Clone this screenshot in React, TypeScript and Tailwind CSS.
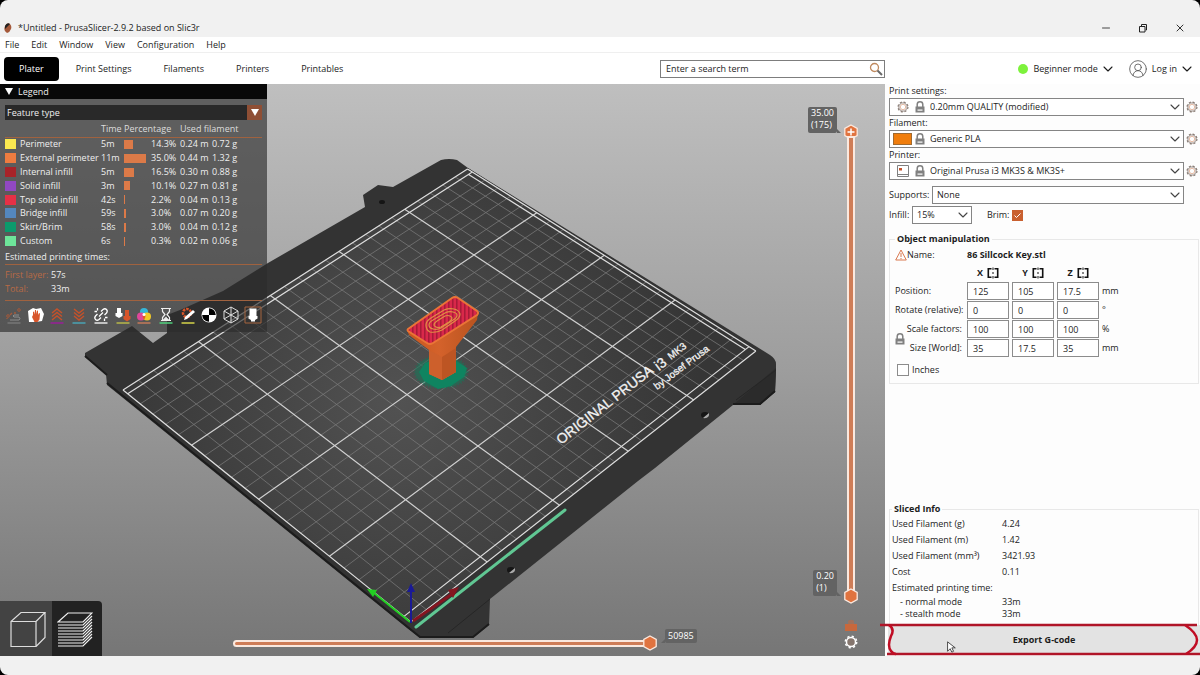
import React, { useState } from "react";
import { ChevronDown, CircleUserRound, Minus, X } from "lucide-react";

const menus = ["File", "Edit", "Window", "View", "Configuration", "Help"];
const tabs = ["Plater", "Print Settings", "Filaments", "Printers", "Printables"];

const features = [
  { name: "Perimeter", color: "bg-[#fbe850]", time: "5m", bar: 9, pct: "14.3%", m: "0.24 m", g: "0.72 g" },
  { name: "External perimeter", color: "bg-[#ee7c40]", time: "11m", bar: 22, pct: "35.0%", m: "0.44 m", g: "1.32 g" },
  { name: "Internal infill", color: "bg-[#a82329]", time: "5m", bar: 10, pct: "16.5%", m: "0.30 m", g: "0.88 g" },
  { name: "Solid infill", color: "bg-[#9148c2]", time: "3m", bar: 6, pct: "10.1%", m: "0.27 m", g: "0.81 g" },
  { name: "Top solid infill", color: "bg-[#e53046]", time: "42s", bar: 1, pct: "2.2%", m: "0.04 m", g: "0.13 g" },
  { name: "Bridge infill", color: "bg-[#5487bd]", time: "59s", bar: 2, pct: "3.0%", m: "0.07 m", g: "0.20 g" },
  { name: "Skirt/Brim", color: "bg-[#0b9a6c]", time: "58s", bar: 2, pct: "3.0%", m: "0.04 m", g: "0.12 g" },
  { name: "Custom", color: "bg-[#6ee59a]", time: "6s", bar: 1, pct: "0.3%", m: "0.02 m", g: "0.06 g" },
];

const transforms = [
  { label: "Position:", values: ["125", "105", "17.5"], unit: "mm" },
  { label: "Rotate (relative):", values: ["0", "0", "0"], unit: "°" },
  { label: "Scale factors:", values: ["100", "100", "100"], unit: "%" },
  { label: "Size [World]:", values: ["35", "17.5", "35"], unit: "mm" },
];

const Gear = ({ className = "" }: { className?: string }) => (
  <svg viewBox="0 0 16 16" className={`h-3 w-3 shrink-0 ${className}`} fill="none">
    <circle cx="8" cy="8" r="6.6" stroke="#8a7d76" strokeWidth="1.6" strokeDasharray="2.9 2.28" />
    <circle cx="8" cy="8" r="5.5" stroke="#8a7d76" strokeWidth="1.2" />
    <circle cx="8" cy="8" r="3.6" stroke="#e3b49c" strokeWidth="1.2" />
  </svg>
);

const Lock = ({ className = "" }: { className?: string }) => (
  <svg viewBox="0 0 10 12" className={`h-3 w-2.5 shrink-0 ${className}`}>
    <path d="M2.2 6V3.4a2.8 2.6 0 0 1 5.6 0V6" fill="none" stroke="#808080" strokeWidth="1.5" />
    <path d="M.5 5.5h9v6h-9z" fill="#808080" />
    <path d="M2.5 8.5h5v1.2h-5z" fill="#fff" />
  </svg>
);

const Mirror = () => (
  <svg viewBox="0 0 12 12" className="h-3 w-3" fill="none" stroke="#111" strokeWidth="1.6">
    <path d="M4.5 1.8H1.3v8.4h3.2M7.5 1.8h3.2v8.4H7.5" />
    <path d="M6 .5V3M6 5v2M6 9v2.5" strokeWidth="1" />
  </svg>
);

type PickerProps = {
  id: string;
  value: string;
  icon?: React.ReactNode;
  className?: string;
};

const Picker = ({ id, value, icon, className = "" }: PickerProps) => (
  <div className={`relative h-[18px] ${className}`}>
    <select
      id={id}
      className={`block h-full w-full appearance-none border border-[#858585] bg-white text-[9px] leading-4 outline-none ${
        icon ? "pl-10" : "pl-1"
      }`}
    >
      <option>{value}</option>
    </select>
    {icon && (
      <div className="pointer-events-none absolute inset-y-0 left-1 flex w-8 items-center justify-between">
        {icon}
        <Lock />
      </div>
    )}
    <ChevronDown className="pointer-events-none absolute right-px top-px h-4 w-4 text-[#444]" strokeWidth={1.6} />
  </div>
);

const Preset = ({ label, ...rest }: PickerProps & { label: string }) => (
  <div>
    <label htmlFor={rest.id} className="block leading-[14px]">
      {label}
    </label>
    <div className="flex items-center gap-0.5 pr-px">
      <Picker {...rest} className="flex-1" />
      <button aria-label={`Edit ${rest.id}`}>
        <Gear />
      </button>
    </div>
  </div>
);

// maps bed millimetres to the scene, x runs 0..250 and y runs -4.5..204
const project = (x: number, y: number) => {
  const u = x / 250;
  const v = 0.0218 + 0.0048 * y;
  const w = 0.1353 * u + 0.1148 * v + 1;
  return [
    (447.3 * u - 273.9 * v + 411) / w,
    (-223.5 * u - 187.2 * v + 622) / w,
  ];
};

const seg = (x1: number, y1: number, x2: number, y2: number) => {
  const [ax, ay] = project(x1, y1);
  const [bx, by] = project(x2, y2);
  return `M${ax.toFixed(1)} ${ay.toFixed(1)}L${bx.toFixed(1)} ${by.toFixed(1)}`;
};

const Y0 = -4.5;
const Y1 = 203.8;
let thin = "";
let bold = "";
for (let x = 10; x < 250; x += 10) {
  if (x % 50) thin += seg(x, Y0, x, Y1);
  else bold += seg(x, Y0, x, Y1);
}
for (let y = 10; y < 200; y += 10) {
  if (y % 50) thin += seg(0, y, 250, y);
  else bold += seg(0, y, 250, y);
}
const frame =
  seg(0, Y0, 250, Y0) +
  seg(0, 0, 250, 0) +
  seg(0, 200, 250, 200) +
  seg(0, Y1, 250, Y1) +
  seg(0, Y0, 0, Y1) +
  seg(250, Y0, 250, Y1) +
  seg(247, 0, 247, 200);

const Scene = () => (
  <svg
    viewBox="0 84 885 572"
    preserveAspectRatio="xMidYMid slice"
    className="absolute inset-0 h-full w-full"
    fontFamily="'Liberation Sans', sans-serif"
  >
    <defs>
      <radialGradient id="bed" gradientUnits="userSpaceOnUse" cx="400" cy="400" r="300">
        <stop offset="0" stopColor="#525252" />
        <stop offset=".55" stopColor="#424242" />
        <stop offset="1" stopColor="#363636" />
      </radialGradient>
      <pattern id="hatch" width="4" height="4" patternUnits="userSpaceOnUse">
        <path d="M0 0h4v4H0z" fill="#d9284a" />
        <path d="M0 0h1.6v4H0z" fill="#a81b38" />
      </pattern>
      <linearGradient id="neck" x1="0" x2="1" y1="0" y2="0">
        <stop offset="0" stopColor="#c9561d" />
        <stop offset=".45" stopColor="#d4622b" />
        <stop offset="1" stopColor="#b9531f" />
      </linearGradient>
    </defs>

    <path
      d="M441 160q8-2 16 0l11 8 302 187q6 4 6 9v8l-1 20-15 13h-27l-78 63-17 13-148 118-1 26-16 13h-53l-13-10L138 410l-31-25-1-11-21-17v-4l47-27 21 17 14-10v-18l13-5 43-19 45-28 97-56-2-12 15-10 15 2z"
      fill="#333"
    />
    <path d="M776 368l-1 24-15 13h-27z" fill="#2b2b2b" />
    <path d="M775 391l-15 13h-27M489 624l-16 13h-53L107 383M85 356l22 19" fill="none" stroke="#1c1c1c" strokeWidth="2" />
    <path d="M490 599l-42 34M776 370l-40 30" fill="none" stroke="#262626" />
    <path d="M468 168l288 183-345 271-289-232z" fill="url(#bed)" />
    <path d={thin} stroke="#777" strokeWidth=".8" fill="none" />
    <path d={bold} stroke="#d0d0d0" strokeWidth="1.2" fill="none" />
    <path d={frame} stroke="#dedede" strokeWidth="1.2" fill="none" />
    <ellipse cx="382" cy="202" rx="3" ry="2" fill="#151515" />
    <ellipse cx="511" cy="570" rx="4" ry="3" fill="#151515" />
    <path d="M509 573q7 1 6-5z" fill="#aaa" />
    <ellipse cx="705" cy="415" rx="4" ry="3" fill="#151515" />
    <path d="M703 418q7 1 6-5z" fill="#aaa" />

    <g fill="#f2f2f2" stroke="#f2f2f2" strokeWidth=".3">
      <text fontSize="14" transform="translate(561 445) rotate(-38)">ORIGINAL PRUSA</text>
      <text fontSize="14" transform="translate(659 371) rotate(-38)">i3</text>
      <text fontSize="10" transform="translate(671 360) rotate(-38)">MK3</text>
      <text fontSize="10" transform="translate(657 390) rotate(-37)">by Josef Prusa</text>
    </g>

    {/* brim and sliced part */}
    <ellipse cx="441" cy="372" rx="26" ry="16" fill="#14795a" opacity=".55" stroke="#14795a" strokeWidth="3" strokeDasharray="1 2" />
    <path d="M419 372l6-9 14-5 16 2 12 8-3 9-13 9-13 3-14-8z" fill="#0f8460" />
    <path d="M407 330l2 5 20 15v24l13 6 14-8v-25l21-27 1-7z" fill="url(#neck)" />
    <path d="M429 350l13 7 14-8v23l-14 8-13-6z" fill="#cd602c" />
    <path d="M442 357l14-9v24l-14 8z" fill="#bd5523" />
    <path
      d="M408 329l44-31q3-2 6 0l19 13q2 2 0 4l-44 28q-3 2-6 0l-19-12q-1-1 0-2z"
      fill="url(#hatch)"
      stroke="#ea7436"
      strokeWidth="2"
    />
    <g fill="none" stroke="#e08f45" strokeWidth="1.2">
      <path d="M426 325q0-4 5-7l13-8q5-2 10-1t6 5q0 4-5 7l-13 9q-6 3-12 2-4-2-4-7z" />
      <path d="M429 325q0-3 4-5l12-7q4-2 8-1t4 3q0 3-4 5l-12 8q-4 2-8 1t-4-4z" />
      <path d="M434 325q0-2 3-4l8-5q3-1 5 0t2 2q0 2-3 4l-8 5q-3 1-5 0t-2-2z" />
    </g>

    {/* priming line and origin axes */}
    <path d="M416 627L565 510" stroke="#60c793" strokeWidth="3" strokeLinecap="round" />
    <path d="M413 621l39-27" stroke="#851520" strokeWidth="3" />
    <path d="M448 590l11-3-6 11z" fill="#851520" />
    <path d="M410 622l-36-29" stroke="#22cf22" strokeWidth="2" />
    <path d="M367 589l10 1-4 7z" fill="#22cf22" />
    <path d="M411 623v-34" stroke="#1a1a96" strokeWidth="2" />
    <path d="M411 583l4 9h-8z" fill="#1a1a96" />
  </svg>
);

const toolIcons = [
  {
    name: "Travel",
    line: "#777777",
    art: (
      <g fill="none" stroke="#8d8d8d">
        <path d="M5 13h9q2-1 0-3H9q-2-1 0-2h5" />
        <path d="M2 12v-1M5 8l2-2M9 6h2" stroke="#a5593a" strokeWidth="1.3" />
        <circle cx="3" cy="9" r="1.3" stroke="#a5593a" />
        <circle cx="14" cy="3" r="1.3" stroke="#a5593a" />
      </g>
    ),
  },
  {
    name: "Wipe",
    art: (
      <g>
        <path d="M1 4l5-3 3 1 5-1 3 6-2 7-6 1H2z" fill="#fff" />
        <path d="M6 8V5l1-.5.6 3L8 3h1l.3 4L10 3.5l1 .2V8l1-2 1 .5-.5 6-2 2.500h-3L5 10z" fill="#d8552a" />
      </g>
    ),
  },
  {
    name: "Retractions",
    line: "#9a1f9a",
    art: <path d="M4 6l5-4 5 4M4 9.5l5-4 5 4M4 13l5-4 5 4" fill="none" stroke="#c4522b" strokeWidth="1.5" />,
  },
  {
    name: "Deretractions",
    line: "#4aa3b5",
    art: <path d="M4 2l5 4 5-4M4 5.5l5 4 5-4M4 9l5 4 5-4" fill="none" stroke="#c4522b" strokeWidth="1.5" />,
  },
  {
    name: "Seams",
    line: "#e8e8e8",
    art: (
      <g fill="none" stroke="#fff" strokeWidth="1.3">
        <path d="M9 4.5l2-2q2-1.5 3.5 0t0 3.5l-2 2M9 10.5l-2 2q-2 1.5-3.5 0t0-3.5l2-2M7 9.5l4-4" />
        <path d="M5.5 1v2.5M2.5 4.5H5M13 10.5h2.5M12.5 11.5V14" />
      </g>
    ),
  },
  {
    name: "Tool changes",
    line: "#b8b84a",
    art: (
      <g>
        <path d="M3 1h4v5h1.5v3L5 11 1.5 9V6H3z" fill="#fff" />
        <path d="M11 3h4v6h1.5v3L13 14.5 9.5 12V9H11z" fill="#d8552a" />
      </g>
    ),
  },
  {
    name: "Color changes",
    line: "#c47a5a",
    art: (
      <g>
        <circle cx="9" cy="5" r="4" fill="#35b5d8" />
        <circle cx="6" cy="9.5" r="4" fill="#e0469a" />
        <circle cx="12" cy="9.5" r="4" fill="#f2c928" />
        <path d="M9 6.5a4 4 0 0 1 0 6 4 4 0 0 1 0-6z" fill="#e05a2a" />
        <circle cx="9" cy="7.5" r="1.5" fill="#fff" />
      </g>
    ),
  },
  {
    name: "Pause prints",
    line: "#4fd07c",
    art: (
      <g fill="none" stroke="#eee" strokeWidth="1.2">
        <path d="M4 1.5h10M4 13.5h10M5.5 2v2.5L8 7.5l-2.5 3v3M12.5 2v2.5L10 7.5l2.5 3v3" />
        <path d="M7 12.5h4l-2-2z" fill="#eee" />
      </g>
    ),
  },
  {
    name: "Custom G-codes",
    line: "#d6d44a",
    art: (
      <g>
        <circle cx="8" cy="6" r="4" fill="none" stroke="#d8552a" strokeWidth="2.5" strokeDasharray="2.5 1" />
        <path d="M5 13l1-3 8-7 2 2-8 7z" fill="#fff" />
      </g>
    ),
  },
  {
    name: "Center of gravity",
    art: (
      <g>
        <circle cx="9" cy="8" r="7.5" fill="#fff" />
        <path d="M9 8V1.2A6.800 6.800 0 0 1 15.800 8zM9 8v6.800A6.800 6.800 0 0 1 2.200 8z" fill="#000" />
      </g>
    ),
  },
  {
    name: "Shells",
    art: <path d="M9 0l7 4v8l-7 4-7-4V4zM9 0v16M2 4l14 8M16 4L2 12" fill="none" stroke="#ddd" />,
  },
  {
    name: "Tool marker",
    art: (
      <g>
        <path d="M1 0h16v16H1z" fill="none" stroke="#a5643f" />
        <path d="M5.5 1.5h7V9h1v2.5L11 13v1.5H7V13l-2.5-1.5V9h1z" fill="#fff" />
      </g>
    ),
  },
];

const Legend = () => {
  const [open, setOpen] = useState(true);
  return (
    <section className="absolute left-0 top-0 w-[267px] bg-[#2d2d2d]/65 text-[#efefef]">
      <button
        onClick={() => setOpen(!open)}
        className="flex h-[15px] w-full items-center gap-1 bg-[#080808] pl-1"
      >
        <svg viewBox="0 0 10 8" className="h-2 w-2.5 fill-white">
          <path d="M1 0h8L5 7z" />
        </svg>
        Legend
      </button>
      {open && (
        <div className="px-[5px] pb-[7px] pt-1.5">
          <div className="relative h-[15px]">
            <select
              aria-label="View type"
              className="block h-full w-full appearance-none bg-[#292929] pl-0.5 text-[9px] outline-none"
            >
              <option>Feature type</option>
            </select>
            <span className="pointer-events-none absolute right-0 top-0 flex h-full w-[15px] items-center justify-center bg-[#8f4f35]">
              <svg viewBox="0 0 10 8" className="h-2 w-2.5 fill-white">
                <path d="M1 0h8L5 7z" />
              </svg>
            </span>
          </div>

          <table className="mt-0.5 h-[126px] w-full table-fixed border-collapse text-left leading-3">
            <colgroup>
              <col className="w-[15px]" />
              <col className="w-[81px]" />
              <col className="w-[23px]" />
              <col className="w-[27px]" />
              <col className="w-[29px]" />
              <col className="w-8" />
              <col />
            </colgroup>
            <thead>
              <tr className="h-[15px] border-b border-[#a0623f] text-[#dcdcdc]">
                <th colSpan={2} />
                <th className="font-normal">Time</th>
                <th colSpan={2} className="font-normal">Percentage</th>
                <th colSpan={2} className="font-normal">Used filament</th>
              </tr>
            </thead>
            <tbody className="whitespace-nowrap">
              {features.map((f) => (
                <tr key={f.name}>
                  <td>
                    <div className={`h-2.5 w-[11px] ${f.color}`} />
                  </td>
                  <td>{f.name}</td>
                  <td>{f.time}</td>
                  <td>
                    <div className="h-[9px] bg-[#dc7a48]" style={{ width: f.bar }} />
                  </td>
                  <td>{f.pct}</td>
                  <td>{f.m}</td>
                  <td>{f.g}</td>
                </tr>
              ))}
            </tbody>
          </table>

          <p className="mt-0.5 border-b border-[#a0623f] leading-[14px]">Estimated printing times:</p>
          <dl className="grid grid-cols-[46px_1fr] border-b border-[#a0623f] pb-1 pt-[3px] leading-[14px]">
            <dt className="text-[#b86a45]">First layer:</dt>
            <dd>57s</dd>
            <dt className="text-[#b86a45]">Total:</dt>
            <dd>33m</dd>
          </dl>

          <div className="mt-1.5 flex justify-between">
            {toolIcons.map((t) => (
              <button key={t.name} aria-label={t.name}>
                <svg viewBox="0 0 18 18" className="h-[18px] w-[18px] overflow-visible">
                  {t.art}
                  {t.line && <path d="M2.5 16h13" stroke={t.line} strokeWidth="1.5" />}
                </svg>
              </button>
            ))}
          </div>
        </div>
      )}
    </section>
  );
};

const Handle = ({ plus }: { plus?: boolean }) => (
  <svg viewBox="0 0 16 16" className="h-4 w-4 shrink-0">
    <path d="M8 1l6.2 3.5v7L8 15l-6.2-3.5v-7z" fill="#e0733f" stroke="#fbe9df" strokeWidth="1.3" />
    {plus && <path d="M8 4.5v7M4.5 8h7" stroke="#fff" strokeWidth="1.5" />}
  </svg>
);

const LayerSlider = () => (
  <div className="absolute bottom-[52px] right-[26px] top-10 flex w-4 flex-col items-center">
    <Handle plus />
    <div className="-my-1 w-2 flex-1 border-2 border-[#fbe9df] bg-[#cf7d57]" />
    <Handle />
    <input
      type="range"
      aria-label="Top layer"
      defaultValue={175}
      max={175}
      className="absolute inset-0 h-full w-full opacity-0 [writing-mode:vertical-lr]"
    />
    <output className="absolute -top-[17px] right-[22px] rounded-xs bg-[#636363] px-[3px] pb-0.5 leading-3 text-white">
      35.00
      <br />
      (175)
      <i className="absolute -right-1 bottom-0 border-b-4 border-r-4 border-transparent border-b-[#636363]" />
    </output>
    <output className="absolute bottom-2 right-[22px] rounded-xs bg-[#636363] px-[3px] pb-0.5 leading-3 text-white">
      0.20
      <br />
      (1)
      <i className="absolute -right-1 bottom-0 border-b-4 border-r-4 border-transparent border-b-[#636363]" />
    </output>
  </div>
);

const MoveSlider = () => (
  <div className="absolute bottom-[5px] left-[233px] right-[227px] flex h-4 items-center">
    <div className="-mr-1 h-[7px] flex-1 rounded-l-full border-2 border-[#fbe9df] bg-[#cf7d57]" />
    <Handle />
    <input type="range" aria-label="Move" defaultValue={50985} max={50985} className="absolute inset-0 w-full opacity-0" />
    <output className="absolute bottom-2 left-full ml-[7px] rounded-xs bg-[#636363] px-[3px] leading-[14px] text-white">
      50985
      <i className="absolute -left-1 bottom-0 border-b-4 border-l-4 border-transparent border-b-[#636363]" />
    </output>
  </div>
);

const Viewport = () => (
  <main className="relative min-w-0 flex-1 overflow-hidden bg-linear-to-b from-[#bfbfbf] via-[#9d9d9d] to-[#767676]">
    <Scene />
    <Legend />
    <div className="absolute bottom-0 left-0 flex h-[55px] overflow-hidden rounded-tr">
      <button aria-label="3D editor view" className="w-[52px] bg-[#434343] pl-2.5">
        <svg viewBox="0 0 36 36" className="h-9 w-9" fill="none" stroke="#ddd" strokeWidth="1.2">
          <path d="M1 10.5h25v25H1zM1 10.5l10-9h24l-9 9M35 1.5v25l-9 9" />
        </svg>
      </button>
      <button aria-label="Preview" className="w-[50px] bg-[#222] pl-[5px]">
        <svg viewBox="0 0 36 36" className="h-9 w-9" fill="none" stroke="#eee" strokeWidth="1.2">
          <path d="M1 11l10-9h24l-9 9z" />
          {[0, 1, 2, 3, 4, 5, 6, 7].map((i) => (
            <path key={i} d={`M1 ${14 + i * 3}h25l9-9`} />
          ))}
        </svg>
      </button>
    </div>
    <MoveSlider />
    <LayerSlider />
    <div className="absolute bottom-[7px] right-[27px] flex w-3.5 flex-col items-center gap-1">
      <button aria-label="One layer lock">
        <svg viewBox="0 0 12 12" className="h-3 w-3 fill-[#c8683c]">
          <path d="M0 5h12v7H0z" />
          <path d="M3 5V3q0-2.2 3-2.2T9 3v2" opacity=".5" />
        </svg>
      </button>
      <button aria-label="Slider settings">
        <svg viewBox="0 0 14 14" className="h-3.5 w-3.5" fill="none" stroke="#fff">
          <circle cx="7" cy="7" r="4.5" fill="#85766e" strokeWidth="1.5" />
          <circle cx="7" cy="7" r="5.7" strokeWidth="1.5" strokeDasharray="2.2 2.28" />
        </svg>
      </button>
    </div>
  </main>
);

const Manipulation = () => (
  <fieldset className="mt-2 border border-[#e8e8e8] pb-1.5 pl-[5px]">
    <legend className="px-0.5 font-bold leading-[14px]">Object manipulation</legend>
    <div className="grid grid-cols-[69px_42px_42px_42px_1fr] items-center gap-x-[3px] gap-y-px">
      <div className="flex h-[18px] items-center">
        <svg viewBox="0 0 12 12" className="h-3 w-3" fill="none" stroke="#d9784f">
          <path d="M6 1l5.3 10H.7z" />
          <path d="M6 4v4M6 9v1.2" />
        </svg>
        Name:
      </div>
      <strong className="col-span-4">86 Sillcock Key.stl</strong>
      <span />
      {["X", "Y", "Z"].map((axis) => (
        <div key={axis} className="flex h-4 items-center justify-center gap-1 font-bold">
          {axis}
          <button aria-label={`Mirror ${axis}`}>
            <Mirror />
          </button>
        </div>
      ))}
      <span />
      {transforms.map((t, row) => (
        <React.Fragment key={t.label}>
          <div className={`relative whitespace-nowrap ${row > 1 ? "pr-0.5 text-right" : ""}`}>
            {row === 3 && <Lock className="absolute -top-2 left-0" />}
            {t.label}
          </div>
          {t.values.map((v, i) => (
            <input
              key={i}
              aria-label={`${t.label} ${"XYZ"[i]}`}
              defaultValue={v}
              className="h-[18px] w-full border border-[#8c8c8c] bg-white pl-[5px] outline-none"
            />
          ))}
          <span>{t.unit}</span>
        </React.Fragment>
      ))}
    </div>
    <label className="mt-1.5 flex h-3.5 items-center gap-[3px] pl-0.5">
      <input type="checkbox" className="h-3 w-3 appearance-none border border-[#8c8c8c] bg-white" />
      Inches
    </label>
  </fieldset>
);

const SlicedInfo = () => (
  <fieldset className="mt-auto border border-b-0 border-[#e8e8e8] pb-[5px] pl-0.5">
    <legend className="px-0.5 font-bold leading-[14px]">Sliced Info</legend>
    <dl className="grid grid-cols-[110px_1fr] leading-4">
      <dt>Used Filament (g)</dt>
      <dd>4.24</dd>
      <dt>Used Filament (m)</dt>
      <dd>1.42</dd>
      <dt>Used Filament (mm³)</dt>
      <dd>3421.93</dd>
      <dt>Cost</dt>
      <dd>0.11</dd>
      <dt className="col-span-2">Estimated printing time:</dt>
      <dt className="pl-2 leading-3">- normal mode</dt>
      <dd className="leading-3">33m</dd>
      <dt className="pl-2 leading-3">- stealth mode</dt>
      <dd className="leading-3">33m</dd>
    </dl>
  </fieldset>
);

const Sidebar = () => (
  <aside className="flex w-[315px] shrink-0 flex-col bg-[#fdfdfd]">
    <div className="flex flex-1 flex-col pl-1 pr-px">
      <Preset id="print" label="Print settings:" value="0.20mm QUALITY (modified)" icon={<Gear className="ml-1" />} />
      <Preset
        id="filament"
        label="Filament:"
        value="Generic PLA"
        icon={<span className="h-3 w-[19px] border border-[#a06a30] bg-[#f07d0c]" />}
      />
      <Preset
        id="printer"
        label="Printer:"
        value="Original Prusa i3 MK3S & MK3S+"
        icon={
          <svg viewBox="0 0 12 12" className="ml-1 h-3 w-3" fill="none" stroke="#808080">
            <path d="M.5.5h11v11H.5zM1 9.500h10" />
            <path d="M2 3h3v2.5H2z" fill="#c4522b" stroke="none" />
          </svg>
        }
      />
      <div className="mt-1.5 flex items-center gap-[3px] pr-[15px]">
        <label htmlFor="supports" className="w-10">Supports:</label>
        <Picker id="supports" value="None" className="flex-1" />
      </div>
      <div className="mt-0.5 flex items-center">
        <label htmlFor="infill" className="w-[23px]">Infill:</label>
        <Picker id="infill" value="15%" className="w-[60px]" />
        <label htmlFor="brim" className="ml-[15px]">Brim:</label>
        <span className="relative ml-[3px] h-[11px] w-[11px]">
          <input id="brim" type="checkbox" defaultChecked className="block h-full w-full appearance-none bg-[#c9602f]" />
          <svg viewBox="0 0 11 11" className="pointer-events-none absolute inset-0" fill="none" stroke="#fff">
            <path d="M2.5 5.5l2 2 4-4" />
          </svg>
        </span>
      </div>
      <Manipulation />
      <SlicedInfo />
    </div>
    <div className="relative h-[31px] shrink-0 pb-0.5 pl-[3px]">
      <button className="h-full w-full bg-[#e3e3e3] pt-px font-bold">Export G-code</button>
      <svg
        viewBox="0 0 320 34"
        preserveAspectRatio="none"
        className="pointer-events-none absolute -left-[5px] -top-0.5 h-[34px] w-80"
        fill="none"
        stroke="#c00d24"
        strokeWidth="2.5"
      >
        <path d="M0 2h317M7 31h313" stroke="#b01528" />
        <path d="M9 2q6 4 2 11-4 10 0 15 2 3 5 3M305 2q12 8 12 15t-11 14" />
      </svg>
      <svg viewBox="0 0 10 14" className="pointer-events-none absolute left-[61px] top-4 h-3 w-2.5">
        <path d="M1 1v11l3-3 2 4 2-1-2-4h4z" fill="#fff" stroke="#333" />
      </svg>
    </div>
  </aside>
);

const App = () => {
  const [tab, setTab] = useState("Plater");
  return (
    <div className="h-screen bg-black">
      <div className="flex h-full flex-col overflow-hidden rounded-lg bg-[#f1f1f1] pb-[19px] pt-[18px] font-['Open_Sans',sans-serif] text-[9px] text-[#1c1c1c]">
        <div className="flex h-[19px] shrink-0 items-center pl-1">
          <svg viewBox="0 0 8 10" className="h-2.5 w-2">
            <path d="M1 3q2-4 5-2 2 2 1 5T3 10Q-1 8 1 3z" fill="#a5593a" />
            <path d="M1 3q2-4 5-2L3 4 1 6z" fill="#222" />
          </svg>
          <h1 className="ml-1.5">*Untitled - PrusaSlicer-2.9.2 based on Slic3r</h1>
          <div className="ml-auto flex items-center gap-[26px] pr-3.5">
            <button aria-label="Minimize">
              <Minus className="h-3 w-3" strokeWidth={1.6} />
            </button>
            <button aria-label="Restore">
              <svg viewBox="0 0 10 10" className="h-2.5 w-2.5" fill="none" stroke="#222">
                <path d="M1.5 3.5H7V9H1.5zM3.5 3V1.500h5V7H7.5" />
              </svg>
            </button>
            <button aria-label="Close">
              <X className="h-3 w-3" strokeWidth={1.8} />
            </button>
          </div>
        </div>

        <nav className="flex h-4 shrink-0 items-center gap-3 border-b border-[#efefef] bg-white pl-[5px]">
          {menus.map((m) => (
            <button key={m}>{m}</button>
          ))}
        </nav>

        <header className="flex h-[31px] shrink-0 items-center bg-white">
          <div className="flex flex-1 items-center pl-1">
            {tabs.map((t) => (
              <button
                key={t}
                onClick={() => setTab(t)}
                className={`mr-0.5 h-6 rounded px-[15px] ${t === tab ? "bg-black text-white" : ""}`}
              >
                {t}
              </button>
            ))}
            <div className="relative ml-auto w-[225px]">
              <input
                type="search"
                aria-label="Search"
                placeholder="Enter a search term"
                className="block h-[18px] w-full border border-[#7d7d7d] bg-white pl-[5px] outline-none placeholder:text-[#1c1c1c]"
              />
              <svg viewBox="0 0 14 14" className="absolute right-0.5 top-0.5 h-3.5 w-3.5" fill="none">
                <circle cx="5.5" cy="5.5" r="4" stroke="#c08a5f" strokeWidth="1.3" />
                <path d="M8.5 8.5L13 13" stroke="#6a6a6a" strokeWidth="2" />
              </svg>
            </div>
          </div>
          <div className="flex w-[315px] shrink-0 items-center justify-end gap-3 pr-[5px]">
            <button className="flex items-center gap-0.5">
              <span className="mr-[3px] h-2.5 w-2.5 rounded-full bg-[#7df23c]" />
              Beginner mode
              <ChevronDown className="h-4 w-4" strokeWidth={1.6} />
            </button>
            <button className="flex items-center gap-0.5">
              <CircleUserRound className="mr-0.5 h-5 w-5 text-[#555]" strokeWidth={1} />
              Log in
              <ChevronDown className="h-4 w-4" strokeWidth={1.6} />
            </button>
          </div>
        </header>

        <div className="flex min-h-0 flex-1">
          <Viewport />
          <Sidebar />
        </div>
      </div>
    </div>
  );
};

export default App;
